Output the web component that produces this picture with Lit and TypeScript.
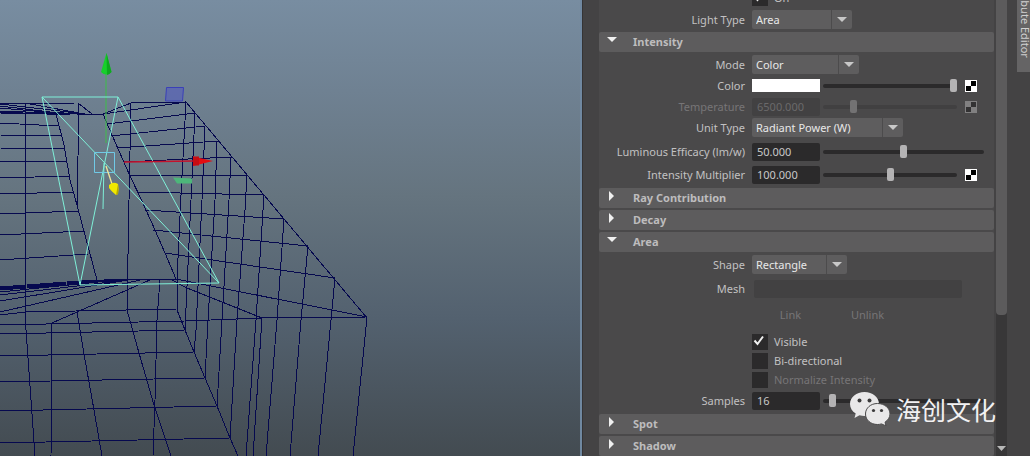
import { LitElement, html, css, svg, nothing } from "lit";
import { customElement, property } from "lit/decorators.js";

const WIRES: string[] = [
  // ceiling edge and outer silhouette
  "0,104 75,103 131,103 186,102 367,318",
  "0,111 25,112 103,115", "0,113 85,114", "0,112 70,115", "0,106 50,112 92,115",
  "0,104 60,111 92,115", "25,103 90,115", "0,108 45,112 92,115", "78,103 92,114", "103,114 131,103", "103,114 186,102",
  // long verticals on the left
  "25,103 25,210 26,330 31,400 35,456",
  "79,103 77,210 77,312 84,354 94,410 102,456",
  "131,103 129,200 127,310 139,353 154,405 171,456",
  "186,102 181,195 177,279 177,310 185,330 194,352 205,378 217,406 230,438 238,456",
  "160,279 157,320 155,400 153,456", "52,323 51,456",
  // inner frame edges
  "56,114 64,145 70,180 77,205 97,280",
  "103,114 112,135 130,176 142,201 155,230 165,253 176,279",
  // left wall rows
  "0,123 58,126", "0,135 61,136", "0,148 64,149", "0,162 68,161", "0,178 70,176",
  "0,194 75,192", "0,214 78,211", "0,235 84,231", "0,260 88,254",
  // right wall rows
  "107,124 195,113", "111,136 205,126", "117,148 218,141", "123,162 232,157", "130,175 247,175",
  "137,192 264,195", "145,210 284,219", "153,230 308,246", "165,253 335,278", "176,279 367,317",
  "170,279 187,288 262,318",
  // right wall columns
  "195,113 191,200 185,330", "205,126 202,200 196,330 194,352", "217,141 215,200 208,320 205,378",
  "231,157 229,200 222,320 217,406", "247,175 245,210 237,320 230,438", "264,195 256,320 246,456",
  "262,318 253,456", "284,219 277,320 266,456", "308,246 301,320 290,456", "335,278 331,320 318,456",
  "367,317 353,456",
  // fan at the floor line
  "0,287 80,281 128,279 176,279", "0,288 80,282 128,279", "0,289 80,283 128,280", "0,290 80,284",
  "0,292 128,279", "0,295 128,280", "0,301 128,280", "0,312 140,280", "52,323 152,279",
  // floor rows
  "0,315 25,312 177,309", "0,325 185,321 262,318 367,317", "0,334 185,330", "0,356 194,352",
  "0,382 205,378", "0,411 217,406", "0,443 230,438",
];

@customElement("scene-view")
class SceneView extends LitElement {
  static styles = css`
    :host { display: block; overflow: hidden; min-width: 0; border-right: 2px solid #7088a0;
      background: linear-gradient(#788da1 0%, #6f8192 20%, #65747f 43%, #53616f 70%, #434b51 100%); }
    svg { display: block; width: 580px; height: 456px; }
    .wire { fill: none; stroke: #06094f; stroke-width: 1; }
    .lamp { fill: none; stroke: #7ff0d8; stroke-width: 1; }
  `;
  render() {
    return html`<svg viewBox="0 0 580 456" role="img" aria-label="Wireframe scene">
      <g class="wire" shape-rendering="crispEdges">${WIRES.map((p) => svg`<polyline points=${p} />`)}</g>
      <path d="M166.500 87.500h17l-1 13.500h-17z" fill="#5660bc" fill-opacity=".65" stroke="#3a40b8" />
      <path d="M106 74V143" stroke="#45b455" stroke-width="1.200" />
      <path d="M106.500 53L111.500 72Q106 77 101 72z" fill="#17cf2b" />
      <path d="M106.500 53L111.500 72Q109 75 107 75z" fill="#0ea81f" />
      <g class="lamp">
        <path d="M42 97H118L80 285L42 97L219 283L118 97M80 285L219 283M104 163L103 209" />
        <path d="M94.500 152.500h20v20h-20z" stroke="#70c9e6" />
      </g>
      <path d="M124 162L194 161" stroke="#c4122c" stroke-width="1.300" />
      <path d="M193 156.500L213 161L193 166z" fill="#e30d12" />
      <path d="M193 156.500h6v9h-6z" fill="#c70c12" />
      <path d="M173 177.500L192 178.500V183.500H177z" fill="#4db67a" />
      <path d="M106 166L112 184" stroke="#f3e89a" stroke-width="1.300" />
      <path d="M109 185Q113 181 118 184Q119 188 118 194L116 195Q111 191 109 188z" fill="#f0e800" />
      <path d="M118 184Q119 188 118 194L116 195z" fill="#b5a800" />
    </svg>`;
  }
}

const shared = css`
  .row { display: grid; grid-template-columns: 146px 1fr; column-gap: 7px; align-items: center; height: 21px; }
  .row.tall { height: 23px; }
  .row.tick { height: 19px; }
  .row.free { height: auto; }
  .name { text-align: right; white-space: nowrap; }
  .off { color: #777577; }
  .line { display: flex; align-items: center; }
  input, button, select { font: inherit; color: inherit; margin: 0; border: 0; border-radius: 0; padding: 0; }
`;

@customElement("pick-row")
class PickRow extends LitElement {
  @property() label = "";
  @property() value = "";
  @property({ type: Number }) wide = 100;
  static styles = [shared, css`
    :host { display: block; }
    .box { position: relative; height: 19px; background: #5e5d5e; border-radius: 2px; }
    select { appearance: none; width: 100%; height: 19px; padding: 0 24px 0 4px; background: none; color: #e8e8e8; display: block; }
    .arrow { position: absolute; top: 0; right: 0; width: 20px; height: 19px; border-left: 1px solid #4c4b4c; pointer-events: none; }
    .arrow path { fill: #c8c8c8; }
  `];
  render() {
    return html`<div class="row">
      <label class="name" for="s">${this.label}</label>
      <div class="box" style="width:${this.wide}px">
        <select id="s"><option>${this.value}</option></select>
        <svg class="arrow" viewBox="0 0 20 19"><path d="M5 7h10l-5 5z" /></svg>
      </div>
    </div>`;
  }
}

@customElement("slide-row")
class SlideRow extends LitElement {
  @property() label = "";
  @property() value = "";
  @property({ type: Number }) level = 50;
  @property({ type: Boolean }) swatch = false;
  @property({ type: Boolean }) map = false;
  @property({ type: Boolean }) tall = false;
  @property({ type: Boolean }) disabled = false;
  static styles = [shared, css`
    :host { display: block; }
    .num { box-sizing: border-box; width: 68px; height: 18px; padding: 0 5px; background: #2b2a2b; border-radius: 2px; color: #c8c8c8; }
    .num:disabled { background: #424142; color: #6a696a; }
    .swatch { width: 68px; height: 13px; background: #fff; }
    .slide { appearance: none; width: 161px; height: 15px; margin-left: 3px; background: none; }
    .slide.short { width: 134px; }
    .slide::-webkit-slider-runnable-track { height: 4px; background: #2b2a2b; border-radius: 2px; }
    .slide::-webkit-slider-thumb { appearance: none; width: 7px; height: 13px; margin-top: -5px; background: #b4b3b4; border-radius: 2px; }
    .slide:disabled::-webkit-slider-runnable-track { background: #414041; }
    .slide:disabled::-webkit-slider-thumb { background: #737273; }
    .map { width: 12px; height: 12px; margin-left: 8px; background: none; }
    .map svg { display: block; }
    .map:disabled { opacity: .3; }
  `];
  render() {
    return html`<div class="row ${this.tall ? "tall" : ""}">
      <label class="name ${this.disabled ? "off" : ""}" for="v">${this.label}</label>
      <div class="line">
        ${this.swatch
          ? html`<button class="swatch" id="v" aria-label="Pick color"></button>`
          : html`<input class="num" id="v" .value=${this.value} ?disabled=${this.disabled} />`}
        <input class="slide ${this.map ? "short" : ""}" type="range" min="0" max="100" .value=${String(this.level)}
          aria-label=${this.label + " slider"} ?disabled=${this.disabled} />
        ${this.map
          ? html`<button class="map" aria-label="Map texture" ?disabled=${this.disabled}>
              <svg width="12" height="12"><path fill="#fff" d="M0 0h12v12H0z" /><path d="M6 1h5v5H6zM1 6h5v5H1z" /></svg>
            </button>`
          : nothing}
      </div>
    </div>`;
  }
}

@customElement("tick-row")
class TickRow extends LitElement {
  @property() label = "";
  @property({ type: Boolean }) checked = false;
  @property({ type: Boolean }) disabled = false;
  static styles = [shared, css`
    :host { display: block; }
    .line { grid-column: 2; gap: 6px; }
    .box { display: grid; width: 16px; height: 16px; background: #2b2a2b; }
    input, .mark { grid-area: 1 / 1; }
    input { appearance: none; width: 16px; height: 16px; }
    .mark { fill: none; stroke: #f0f0f0; stroke-width: 2; pointer-events: none; }
  `];
  render() {
    return html`<div class="row tick"><label class="line ${this.disabled ? "off" : ""}">
      <span class="box"><input type="checkbox" .checked=${this.checked} ?disabled=${this.disabled} />
        ${this.checked ? html`<svg class="mark" viewBox="0 0 16 16"><path d="M2.500 6.500L5.500 10L11 2.500" /></svg>` : nothing}
      </span>${this.label}</label></div>`;
  }
}

@customElement("fold-head")
class FoldHead extends LitElement {
  @property() label = "";
  @property({ type: Boolean }) open = false;
  static styles = [shared, css`
    :host { display: block; margin-bottom: 2px; }
    button { display: flex; align-items: center; gap: 16px; width: 100%; height: 20px; padding-left: 6px;
      background: #5d5c5d; border-radius: 2px; color: #bdbcbd; font-weight: bold; }
    svg { width: 12px; height: 20px; fill: #f0f0f0; }
  `];
  render() {
    return html`<button aria-expanded=${this.open ? "true" : "false"}>
      <svg viewBox="0 0 12 20"><path d=${this.open ? "M2 5h10l-5 5z" : "M4 3v10l5-5z"} /></svg>${this.label}</button>`;
  }
}

@customElement("app-root")
class AppRoot extends LitElement {
  static styles = [shared, css`
    :host { display: grid; grid-template-columns: minmax(0, 1fr) 448px; height: 100vh; overflow: hidden; position: relative;
      font: 11px/16px "Noto Sans", "Open Sans", sans-serif; color: #c2c1c2; background: #444344; }
    .panel { display: grid; grid-template-columns: 1fr 11px 21px; column-gap: 2px; padding-left: 16px; min-height: 0;
      border-left: 1px solid #353435; box-sizing: border-box; }
    .list { min-width: 0; min-height: 0; overflow: hidden; }
    .content { margin-top: -12px; background: #4a494a; }
    .part { padding-bottom: 2px; }
    .pair { padding-top: 2px; }
    .mesh { width: 208px; height: 18px; margin-left: 2px; background: #424142; border-radius: 2px; }
    .links { grid-column: 2; display: flex; height: 30px; color: #777577; }
    .links button { width: 77px; background: none; }
    .bar { display: flex; flex-direction: column; background: #383738; }
    .grip { flex: 0 0 69%; background: #5c5b5c; border-radius: 0 0 4px 4px; }
    .down { margin-top: auto; height: 16px; background: none; }
    .down svg { display: block; fill: #b8b8b8; }
    .side { display: flex; justify-content: flex-end; align-items: flex-start; }
    .tab { display: flex; align-items: center; justify-content: flex-end; box-sizing: border-box; width: 13px; height: 72px;
      padding: 0 0 14px 3px; writing-mode: vertical-rl; background: #656465; color: #d0d0d0;
      line-height: 10px; white-space: nowrap; }
    .brand { position: absolute; right: 34px; bottom: 29px; display: flex; align-items: center; gap: 6px; color: #f2f1f2;
      font: 25px/36px "Noto Sans CJK SC", sans-serif; }
    .brand svg { display: block; }
  `];
  render() {
    return html`
      <scene-view></scene-view>
      <div class="panel">
        <div class="list"><div class="content">
          <tick-row label="On" checked></tick-row>
          <div class="part pair"><pick-row label="Light Type" value="Area" wide="100"></pick-row></div>
          <fold-head label="Intensity" open></fold-head>
          <div class="part">
            <pick-row label="Mode" value="Color" wide="107"></pick-row>
            <slide-row label="Color" swatch map level="100"></slide-row>
            <slide-row label="Temperature" value="6500.000" map level="21" disabled></slide-row>
            <pick-row label="Unit Type" value="Radiant Power (W)" wide="151"></pick-row>
            <div class="pair">
              <slide-row label="Luminous Efficacy (lm/w)" value="50.000" tall level="50"></slide-row>
              <slide-row label="Intensity Multiplier" value="100.000" tall map level="50"></slide-row>
            </div>
          </div>
          <fold-head label="Ray Contribution"></fold-head>
          <fold-head label="Decay"></fold-head>
          <fold-head label="Area" open></fold-head>
          <div class="part">
            <pick-row label="Shape" value="Rectangle" wide="95"></pick-row>
            <div class="pair">
              <div class="row tall"><label class="name" for="mesh">Mesh</label><input class="mesh" id="mesh" disabled /></div>
              <div class="row free"><div class="links"><button disabled>Link</button><button disabled>Unlink</button></div></div>
            </div>
            <div class="pair">
              <tick-row label="Visible" checked></tick-row>
              <tick-row label="Bi-directional"></tick-row>
              <tick-row label="Normalize Intensity" disabled></tick-row>
              <slide-row label="Samples" value="16" tall level="4"></slide-row>
            </div>
          </div>
          <fold-head label="Spot"></fold-head>
          <fold-head label="Shadow"></fold-head>
        </div></div>
        <div class="bar"><div class="grip"></div>
          <button class="down" aria-label="Scroll down"><svg width="11" height="16"><path d="M1 6h9l-4.500 5z" /></svg></button></div>
        <div class="side"><div class="tab">Attribute Editor</div></div>
      </div>
      <div class="brand">
        <svg width="40" height="34" viewBox="0 0 40 34">
          <path fill="#e9e8e9" d="M14.500 0C6.500 0 0 5.300 0 12c0 4 2.200 7.300 5.700 9.500L4.500 26l5-2.700c1.700.5 3.400.7 5 .7C22.500 24 29 18.700 29 12S22.500 0 14.500 0z" />
          <path fill="#e9e8e9" stroke="#4a494a" d="M27.500 11.500c-6.900 0-12 4.600-12 10.500s5.100 10.500 12 10.500c1.400 0 2.700-.2 4-.6l4.500 2-1-3.700c3-2 5-4.900 5-8.200 0-5.900-5.500-10.500-12.500-10.500z" />
          <g fill="#3b3a3b"><circle cx="9.500" cy="8.500" r="2" /><circle cx="19.500" cy="8.500" r="2" /><circle cx="23.500" cy="18.500" r="1.600" /><circle cx="31.500" cy="18.500" r="1.600" /></g>
        </svg>
        <span>海创文化</span>
      </div>`;
  }
}
